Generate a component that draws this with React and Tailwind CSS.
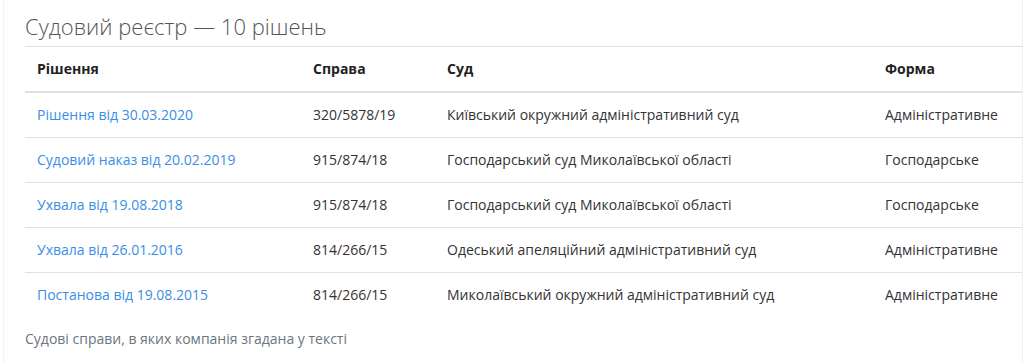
import React from "react";

const rows = [
  {
    title: "Рішення від 30.03.2020",
    caseNo: "320/5878/19",
    court: "Київський окружний адміністративний суд",
    form: "Адміністративне",
  },
  {
    title: "Судовий наказ від 20.02.2019",
    caseNo: "915/874/18",
    court: "Господарський суд Миколаївської області",
    form: "Господарське",
  },
  {
    title: "Ухвала від 19.08.2018",
    caseNo: "915/874/18",
    court: "Господарський суд Миколаївської області",
    form: "Господарське",
  },
  {
    title: "Ухвала від 26.01.2016",
    caseNo: "814/266/15",
    court: "Одеський апеляційний адміністративний суд",
    form: "Адміністративне",
  },
  {
    title: "Постанова від 19.08.2015",
    caseNo: "814/266/15",
    court: "Миколаївський окружний адміністративний суд",
    form: "Адміністративне",
  },
];

const App = () => {
  return (
    <div
      className="min-h-[363px] bg-white pl-[3px] pr-[1px]"
      style={{ fontFamily: "'Open Sans', 'Noto Sans', sans-serif" }}
    >
      <div className="min-h-[363px] border-x border-[#f1f1f1] bg-white pl-[21px] pr-0">
        <h1 className="pt-[12px] pb-[6px] text-[22px] leading-[28px] font-light text-[#555]">
          Судовий реєстр — 10 рішень
        </h1>

        <table className="w-full border-collapse text-[14px] text-[#333]">
          <thead>
            <tr>
              <th className="w-[276px] border-t border-b-2 border-[#dee2e6] px-3 py-3 text-left leading-5 font-bold text-[#222]">
                Рішення
              </th>
              <th className="w-[134px] border-t border-b-2 border-[#dee2e6] px-3 py-3 text-left leading-5 font-bold text-[#222]">
                Справа
              </th>
              <th className="w-[438px] border-t border-b-2 border-[#dee2e6] px-3 py-3 text-left leading-5 font-bold text-[#222]">
                Суд
              </th>
              <th className="border-t border-b-2 border-[#dee2e6] px-3 py-3 text-left leading-5 font-bold text-[#222]">
                Форма
              </th>
            </tr>
          </thead>
          <tbody>
            {rows.map((r, i) => (
              <tr key={i} className={i > 0 ? "border-t border-[#dee2e6]" : ""}>
                <td className="px-3 py-3 leading-5">
                  <a href="#" className="text-[#3a8ee6]">
                    {r.title}
                  </a>
                </td>
                <td className="px-3 py-3 leading-5">{r.caseNo}</td>
                <td className="px-3 py-3 leading-5">{r.court}</td>
                <td className="px-3 py-3 leading-5">{r.form}</td>
              </tr>
            ))}
          </tbody>
        </table>

        <p className="pt-3 text-[14px] leading-5 text-[#6c757d]">
          Судові справи, в яких компанія згадана у тексті
        </p>
      </div>
    </div>
  );
};

export default App;
